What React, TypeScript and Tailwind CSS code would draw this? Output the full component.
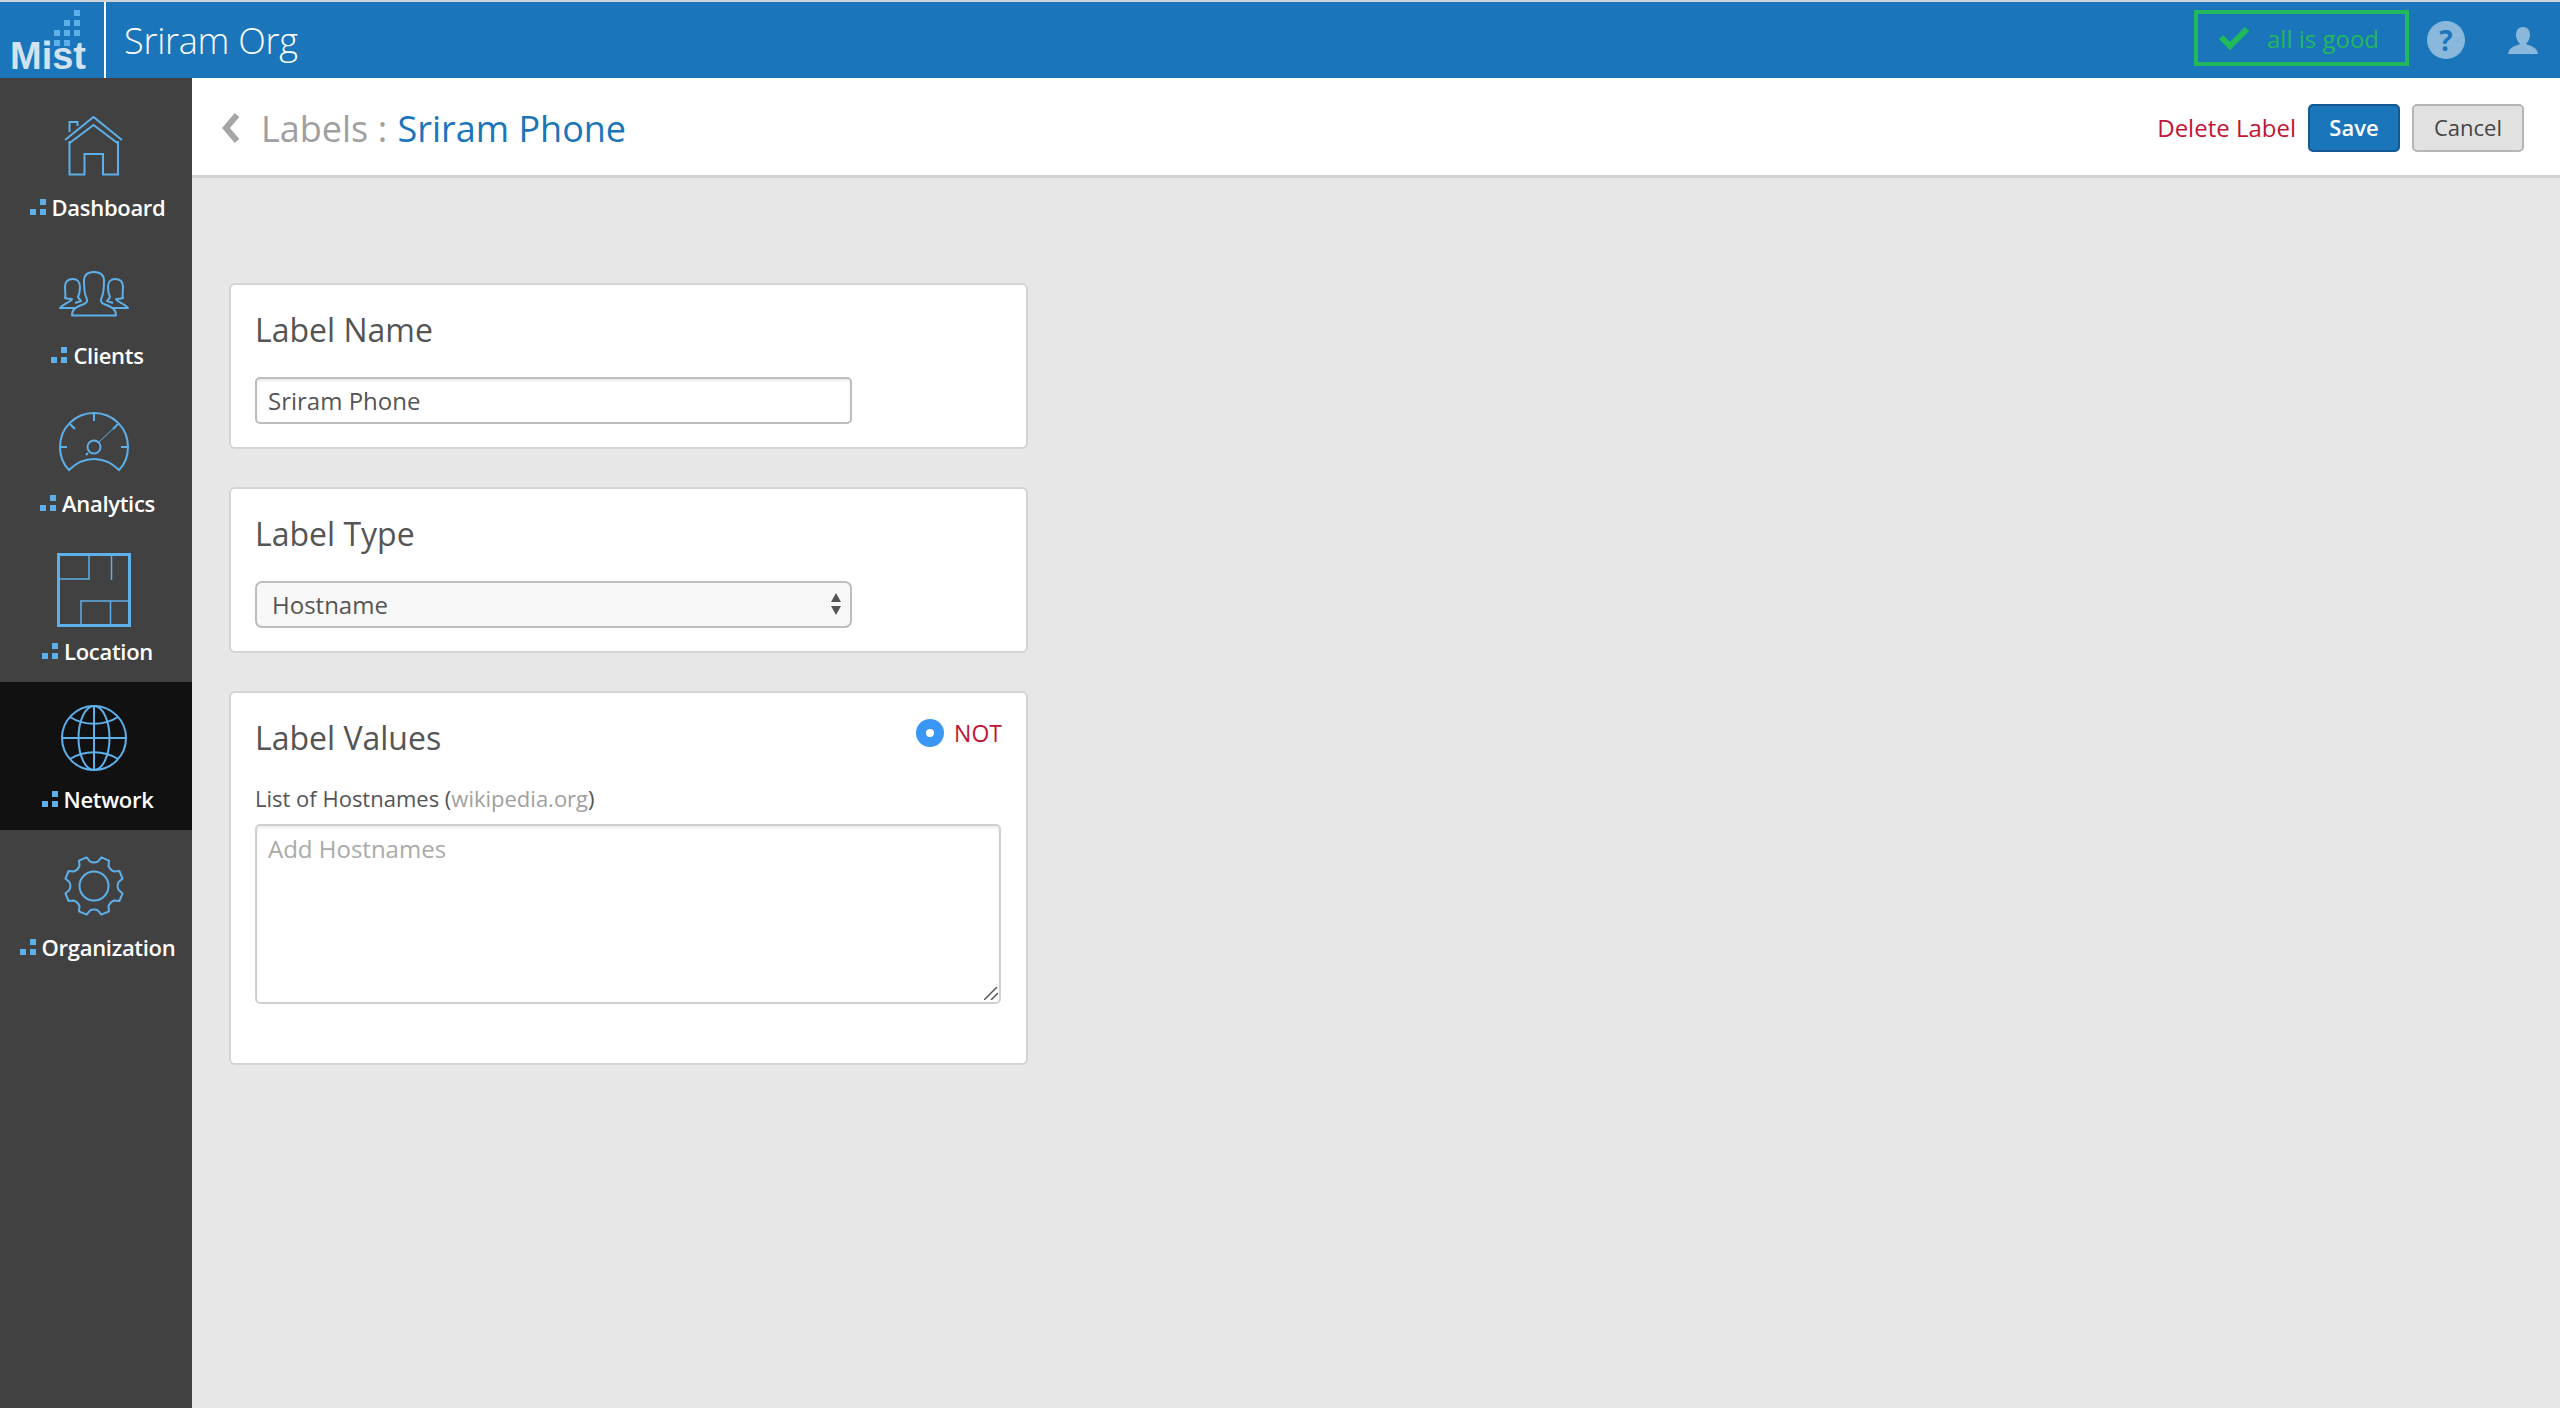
const navItems = [
  { name: 'Dashboard', icon: <HouseIcon /> },
  { name: 'Clients', icon: <ClientsIcon /> },
  { name: 'Analytics', icon: <GaugeIcon /> },
  { name: 'Location', icon: <FloorIcon /> },
  { name: 'Network', icon: <GlobeIcon />, active: true },
  { name: 'Organization', icon: <GearIcon /> },
]

function HouseIcon() {
  return (
    <svg width="60" height="60" viewBox="0 0 60 60" fill="none" stroke="#5eb0ea" strokeWidth="2">
      <path d="M1 24 L29.500 1 L58 24" />
      <path d="M5 27.500 L29.500 9 L54 27.500" />
      <path d="M5.500 25 V58.500 H20.500 V38 H39 V58.500 H54 V25" />
      <path d="M5.500 16 V6 H13.500 V10" />
    </svg>
  )
}

const sidePerson = 'M14 8 C9 8 6 11 6 16 C6 21 7 24 6 27 C9 28 11 28 13 28 C12 31 4 33 1 37 H16 M14 8 C18 8 21 11 21 16 C21 20 20 24 19 26 C20 28 21 29 22 30 L16 32'

function ClientsIcon() {
  return (
    <svg width="70" height="46" viewBox="0 0 70 46" fill="none" stroke="#5eb0ea" strokeWidth="2" strokeLinejoin="round">
      <path d="M13 44.500 C13 38 17 36 24 33.500 C28 32 29 30 27.500 27 C25 22 25 18 25 10 C25 4 29 1 35 1 C41 1 45 4 45 10 C45 18 45 22 42.500 27 C41 30 42 32 46 33.500 C53 36 57 38 57 44.500 Z" />
      <path d={sidePerson} />
      <g transform="translate(70 0) scale(-1 1)">
        <path d={sidePerson} />
      </g>
    </svg>
  )
}

function GaugeIcon() {
  return (
    <svg width="70" height="60" viewBox="0 0 70 60" fill="none" stroke="#5eb0ea" strokeWidth="2">
      <path d="M10 58 C2 50 1 42 1 35 C1 16 16 1 35 1 C54 1 69 16 69 35 C69 42 68 50 60 58 C52 50 44 47 35 47 C26 47 18 50 10 58 Z" />
      <path d="M35 1 V9 M1 35 H8 M62 35 H69 M11 12 L16 17 M59 12 L54 17" />
      <circle cx="35" cy="35" r="6.500" />
      <path d="M40 30 L58 13" strokeWidth="1" />
      <path d="M29 41 L27 43" />
    </svg>
  )
}

function FloorIcon() {
  return (
    <svg width="74" height="74" viewBox="0 0 74 74" fill="none" stroke="#5eb0ea">
      <rect x="1.500" y="1.500" width="71" height="71" strokeWidth="3" />
      <path d="M32 1 V26 H2 M54.500 2 V27 M24 73 V48 H74 M53.500 48 V73" strokeWidth="1.500" />
    </svg>
  )
}

function GlobeIcon() {
  return (
    <svg width="66" height="66" viewBox="0 0 66 66" fill="none" stroke="#5eb0ea" strokeWidth="2">
      <circle cx="33" cy="33" r="32" />
      <path d="M33 1 V65 M1 33 H65" />
      <ellipse cx="33" cy="33" rx="15.500" ry="32" />
      <path d="M9 12 C23 21 43 21 57 12 M9 54 C23 45 43 45 57 54" />
    </svg>
  )
}

// 8 teeth, a valley sits straight up
function gearPath() {
  const pt = (r: number, deg: number) => {
    const a = (deg * Math.PI) / 180
    return `${(30 + r * Math.sin(a)).toFixed(1)} ${(30 - r * Math.cos(a)).toFixed(1)}`
  }
  let d = `M${pt(29.500, 14.500)}`
  for (let k = 0; k < 8; k++) {
    const a = 22.5 + 45 * k
    d += ` L${pt(29.500, a + 8)} L${pt(25, a + 13)} Q${pt(22.500, a + 22.500)} ${pt(25, a + 32)} L${pt(29.500, a + 37)}`
  }
  return d + ' Z'
}

function GearIcon() {
  return (
    <svg width="60" height="60" viewBox="0 0 60 60" fill="none" stroke="#5eb0ea" strokeWidth="2" strokeLinejoin="round">
      <circle cx="30" cy="30" r="14.500" />
      <path d={gearPath()} />
    </svg>
  )
}

function Dots() {
  return (
    <svg width="16" height="16" viewBox="0 0 16 16" fill="#5eb0ea" className="shrink-0">
      <rect x="0" y="10" width="6" height="6" />
      <rect x="10" y="10" width="6" height="6" />
      <rect x="10" y="0" width="6" height="6" />
    </svg>
  )
}

function Logo() {
  const dots = [
    [74, 8],
    [64, 18], [74, 18],
    [54, 28], [64, 28], [74, 28],
    [44, 38], [54, 38], [64, 38],
  ]
  return (
    <div className="relative w-[104px] h-full shrink-0">
      <svg width="104" height="76" viewBox="0 0 104 76" fill="#5eb0ea" className="absolute left-0 top-0">
        {dots.map(([x, y]) => <rect key={`${x}-${y}`} x={x} y={y} width="6" height="6" />)}
      </svg>
      <span className="absolute left-[10px] top-[32px] text-[38px] leading-[44px] font-bold text-[#d3e2ef] font-['Liberation_Sans',sans-serif]">Mist</span>
    </div>
  )
}

function Card({ title, right, children, className }: { title: string; right?: React.ReactNode; children: React.ReactNode; className: string }) {
  return (
    <div className={`bg-white border-2 border-[#d4d4d4] rounded-[6px] w-[799px] px-[24px] ${className}`}>
      <div className="flex justify-between items-start">
        <h2 className="text-[32px] leading-[44px] text-[#555] mt-[23px]">{title}</h2>
        {right}
      </div>
      {children}
    </div>
  )
}

export default function App() {
  return (
    <div className="flex flex-col h-screen overflow-hidden bg-[#e7e7e7] font-['Open_Sans',sans-serif]">
      <header className="h-[78px] shrink-0 bg-[#1a75bb] border-t-2 border-[#cfd4d8] flex items-center">
        <Logo />
        <div className="w-[2px] h-full bg-white" />
        <div className="ml-[18px] mt-[2px] text-[36px] leading-[50px] font-light tracking-[-0.25px] text-white">Sriram Org</div>
        <div className="ml-auto flex items-center mr-[22px]">
          <div className="w-[215px] h-[56px] mb-[4px] border-4 border-[#22b95c] flex items-center pl-[21px]">
            <svg width="30" height="24" viewBox="0 0 30 24" fill="none" stroke="#22b95c" strokeWidth="6"><path d="M2 11 L11 20 L28 3" /></svg>
            <span className="ml-[18px] mt-[2px] text-[24px] leading-[34px] text-[#22b95c]">all is good</span>
          </div>
          <div className="ml-[18px] w-[38px] h-[38px] rounded-full bg-[#8ab8dd] flex items-center justify-center text-[28px] leading-none font-bold text-[#1a75bb]">?</div>
          <svg width="30" height="27" viewBox="0 0 30 27" fill="#8ab8dd" className="ml-[43px]">
            <path d="M15 0 C20 0 22 4 22 8 C22 12 20 15 18 17 C23 19 29 20 30 27 H0 C1 20 7 19 12 17 C10 15 8 12 8 8 C8 4 10 0 15 0 Z" />
          </svg>
        </div>
      </header>

      <div className="flex flex-1 min-h-0">
        <nav className="w-[192px] shrink-0 bg-[#414141] pt-[12px]">
          {navItems.map((item) => (
            <div key={item.name} className={`h-[148px] flex flex-col items-center ${item.active ? 'bg-[#111111]' : ''}`}>
              <div className="h-[100px] mt-[6px] pr-[4px] flex items-center justify-center">{item.icon}</div>
              <div className="h-[22px] ml-[3px] flex items-center gap-[6px] text-[22px] font-semibold tracking-[-0.3px] text-white">
                <Dots />
                {item.name}
              </div>
            </div>
          ))}
        </nav>

        <main className="flex-1 min-w-0">
          <div className="h-[100px] bg-white border-b-[3px] border-[#d2d2d2] flex items-center pt-[2px] pl-[30px] pr-[36px]">
            <svg width="18" height="30" viewBox="0 0 18 30" fill="none" stroke="#a6a6a6" strokeWidth="6"><path d="M15 2 L4 15 L15 28" /></svg>
            <div className="ml-[21px] mt-[2px] text-[36px] leading-[50px] text-[#a0a0a0]">
              Labels : <span className="ml-[1px] text-[#1a75bb]">Sriram Phone</span>
            </div>
            <a className="ml-auto text-[24px] text-[#c01535]">Delete Label</a>
            <button className="ml-[12px] w-[92px] h-[48px] rounded-[5px] bg-[#1a75bb] border-2 border-[#14598f] text-white text-[22px] font-semibold">Save</button>
            <button className="ml-[12px] w-[112px] h-[48px] rounded-[5px] bg-[#e2e2e2] border-2 border-[#b5b5b5] text-[#444] text-[22px]">Cancel</button>
          </div>

          <div className="pl-[37px] pt-[105px] flex flex-col gap-[38px]">
            <Card title="Label Name" className="h-[166px]">
              <input
                readOnly
                value="Sriram Phone"
                className="mt-[25px] block w-[597px] h-[47px] px-[11px] bg-white border-2 border-[#bdbdbd] rounded-[5px] shadow-[inset_0_2px_3px_rgba(0,0,0,0.08)] text-[24px] text-[#555] outline-none"
              />
            </Card>
            <Card title="Label Type" className="h-[166px]">
              <div className="mt-[25px] relative w-[597px] h-[47px] pl-[15px] bg-[#f8f8f8] border-2 border-[#bdbdbd] rounded-[7px] flex items-center text-[24px] text-[#555]">
                Hostname
                <svg width="12" height="22" viewBox="0 0 12 22" fill="#555" className="absolute right-[8px] top-[10px]">
                  <path d="M6 0 L11 9 H1 Z M1 13 H11 L6 22 Z" />
                </svg>
              </div>
            </Card>
            <Card
              title="Label Values"
              className="h-[374px]"
              right={
                <div className="flex items-center mt-[26px]">
                  <span className="w-[28px] h-[28px] rounded-full bg-[#3b97f6] flex items-center justify-center">
                    <span className="w-[8px] h-[8px] rounded-full bg-white" />
                  </span>
                  <span className="ml-[10px] text-[23px] leading-[28px] text-[#c01535]">NOT</span>
                </div>
              }
            >
              <div className="mt-[23px] text-[22px] leading-[30px] text-[#555]">
                List of Hostnames (<span className="text-[#a0a0a0]">wikipedia.org</span>)
              </div>
              <div className="relative mt-[11px] w-[746px]">
                <textarea
                  readOnly
                  placeholder="Add Hostnames"
                  className="block w-full h-[180px] px-[11px] py-[5px] bg-white border-2 border-[#d0d0d0] rounded-[5px] shadow-[inset_0_2px_3px_rgba(0,0,0,0.08)] text-[24px] text-[#555] placeholder:text-[#aaa] outline-none resize-none"
                />
                <svg width="14" height="13" viewBox="0 0 14 13" fill="none" stroke="#555" strokeWidth="1.500" className="absolute right-[3px] bottom-[4px]">
                  <path d="M0 13 L13 0 M7 13 L14 6" />
                </svg>
              </div>
            </Card>
          </div>
        </main>
      </div>
    </div>
  )
}
